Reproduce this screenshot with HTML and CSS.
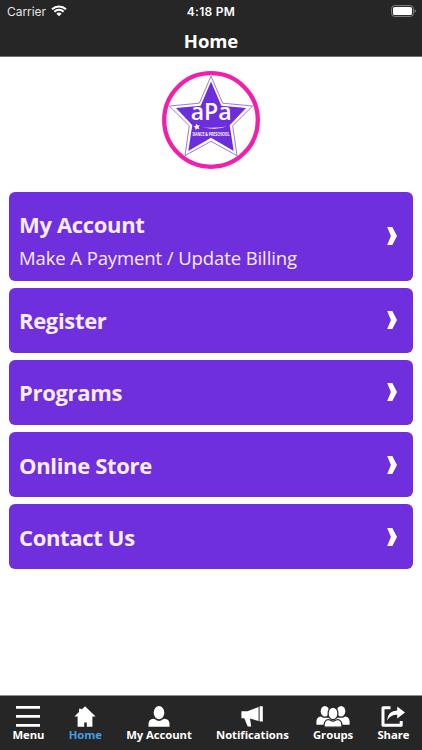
FILE: index.html
```html
<!DOCTYPE html>
<html lang="en">
<head>
    <meta charset="UTF-8">
    <meta name="viewport" content="width=device-width, initial-scale=1.0">
    <title>Home</title>
    <link rel="stylesheet" href="styles.css">
</head>
<body>
    <header class="header">
        <div class="status-bar">
            <div class="carrier">
                <span>Carrier</span>
                <svg class="wifi" width="16" height="12" viewBox="0 0 16 12">
                    <path d="M1 4.2A10.2 10.2 0 0 1 15 4.2M3.4 6.7A6.7 6.7 0 0 1 12.6 6.7" fill="none" stroke="#fff" stroke-width="2"/>
                    <path d="M8 11.3L5.4 8.7A3.8 3.8 0 0 1 10.6 8.7Z" fill="#fff"/>
                </svg>
            </div>
            <div class="time">4:18 PM</div>
            <svg class="battery" width="26" height="12" viewBox="0 0 26 12">
                <rect x="0.6" y="0.6" width="21.8" height="10.8" rx="3" fill="none" stroke="#858585"/>
                <rect x="2" y="2" width="19" height="8" rx="1.6" fill="#fff"/>
                <path d="M23.6 4.2q1.4.6 1.4 1.8t-1.4 1.8z" fill="#858585"/>
            </svg>
        </div>
        <h1 class="page-title">Home</h1>
    </header>

    <main class="content">
        <!-- Logo -->
        <svg class="logo" width="98" height="98" viewBox="0 0 98 98">
            <circle cx="49" cy="49" r="46.8" fill="#fff" stroke="#f21fac" stroke-width="4.3"/>
            <path d="M49 5.2L60.7 32.2L90.7 35L70.7 54.8L75 84.6L49 70.3L23 84.6L27.3 54.8L7.3 35L37.3 32.2Z" fill="#fff" stroke="#7045bd" stroke-width=".7"/>
            <path d="M49 10.5L59.3 34.8L84 37L67.7 54.2L71.7 80L49 66.8L26.3 80L30.3 54.2L14 37L38.7 34.8Z" fill="#6c2edb"/>
            <text class="logo-name" x="49.2" y="49.3" textLength="41" lengthAdjust="spacingAndGlyphs">aPa</text>
            <path d="M34.2 52.5l1.3 2 2.3-.3-1.3 2 1 2.1-2.3-.7-1.7 1.6v-2.4l-2.1-1.1 2.2-.8z" fill="#fff"/>
            <path d="M40 56q12 2 25-.7-11 4.3-25 .7z" fill="#fff"/>
            <text class="logo-tag" x="49" y="65.4" textLength="37" lengthAdjust="spacingAndGlyphs">DANCE &amp; PRESCHOOL</text>
        </svg>

        <!-- Links -->
        <div class="link-list">
            <a class="link-card tall">
                <div>
                    <h2>My Account</h2>
                    <p>Make A Payment / Update Billing</p>
                </div>
                <svg class="arrow" width="10" height="18" viewBox="0 0 10 18"><path d="M.2 0H5.3L10 9L5.3 18H.2L3.9 9Z"/></svg>
            </a>
            <a class="link-card">
                <h2>Register</h2>
                <svg class="arrow" width="10" height="18" viewBox="0 0 10 18"><path d="M.2 0H5.3L10 9L5.3 18H.2L3.9 9Z"/></svg>
            </a>
            <a class="link-card">
                <h2>Programs</h2>
                <svg class="arrow" width="10" height="18" viewBox="0 0 10 18"><path d="M.2 0H5.3L10 9L5.3 18H.2L3.9 9Z"/></svg>
            </a>
            <a class="link-card">
                <h2>Online Store</h2>
                <svg class="arrow" width="10" height="18" viewBox="0 0 10 18"><path d="M.2 0H5.3L10 9L5.3 18H.2L3.9 9Z"/></svg>
            </a>
            <a class="link-card">
                <h2>Contact Us</h2>
                <svg class="arrow" width="10" height="18" viewBox="0 0 10 18"><path d="M.2 0H5.3L10 9L5.3 18H.2L3.9 9Z"/></svg>
            </a>
        </div>
    </main>

    <!-- Bottom tabs -->
    <nav class="tab-bar">
        <a class="tab">
            <svg width="24" height="22" viewBox="0 0 24 22"><path d="M0 0h24v2.7H0zM0 9h24v2.7H0zM0 18h24v2.7H0z"/></svg>
            <span>Menu</span>
        </a>
        <a class="tab active">
            <svg width="22" height="22" viewBox="0 0 22 22"><path d="M11 .3L21.6 10.4H18.4V20.7H12.8V16.4H10.2V20.7H3.6V10.4H.4L5 6.1V2.8H7.5V3.7Z"/></svg>
            <span>Home</span>
        </a>
        <a class="tab">
            <svg width="22" height="22" viewBox="0 0 22 22"><ellipse cx="11" cy="6.7" rx="5.3" ry="6.6"/><path d="M.5 20.7V18.2Q.5 13 5.5 12.7L7 13.3Q11 16.7 15 13.3L16.5 12.7Q21.5 13 21.5 18.2V20.7Z"/></svg>
            <span>My Account</span>
        </a>
        <a class="tab">
            <svg width="22" height="22" viewBox="0 0 22 22"><path d="M.4 5.3H6.5L17.6.9V15.1L9 12.4L10.2 20.5H6.7L3.3 12.2H.4ZM18.6.2h3.2v15.4h-3.2z"/></svg>
            <span>Notifications</span>
        </a>
        <a class="tab">
            <svg width="34" height="22" viewBox="0 0 34 22">
                <ellipse cx="8.9" cy="5.2" rx="4.2" ry="5.2"/>
                <ellipse cx="25.1" cy="5.2" rx="4.2" ry="5.2"/>
                <path d="M.4 18.7V15.5Q.6 11 4.8 10.6L7 11.7H27L29.2 10.6Q33.4 11 33.6 15.5V18.7Z"/>
                <path class="cutout" d="M8.1 21.2V18.4Q8.6 14.1 12.4 13.5L14.5 14.2Q17 15.9 19.5 14.2L21.6 13.5Q25.4 14.1 25.9 18.4V21.2Z"/>
                <ellipse class="cutout" cx="17" cy="7.4" rx="4.9" ry="6.3"/>
            </svg>
            <span>Groups</span>
        </a>
        <a class="tab">
            <svg width="24" height="22" viewBox="0 0 24 22"><path class="line" d="M9.5 1.8H2V19.2H20.2V15"/><path d="M6 14.6Q7 4.6 16.2 4.6V.6L24 6.5L16.2 12.4V8.7Q9.7 8.4 6 14.6Z"/></svg>
            <span>Share</span>
        </a>
    </nav>
</body>
</html>
```
FILE: styles.css
```css
* {
    box-sizing: border-box;
}
body {
    margin: 0;
    height: 750px;
    display: flex;
    flex-direction: column;
    background-color: #fff;
    font-family: "Open Sans", sans-serif;
    overflow: hidden;
}
h1, h2, p {
    margin: 0;
}
.header {
    height: 57px;
    background-color: #262626;
    border-bottom: 1px solid #707070;
    color: #fff;
}
.status-bar {
    display: grid;
    grid-template-columns: 1fr auto 1fr;
    align-items: center;
    height: 22px;
    padding: 0 5px 0 7px;
    font-family: Inter, sans-serif;
    font-size: 12px;
}
.carrier {
    display: flex;
    align-items: center;
    gap: 5px;
    color: #e4e4e4;
    letter-spacing: -0.05px;
}
.wifi {
    margin-top: -1px;
}
.time {
    font-weight: 600;
    letter-spacing: 0.3px;
    position: relative;
    left: -1px;
}
.battery {
    justify-self: end;
    margin-top: -1px;
}
.page-title {
    font-size: 18.5px;
    line-height: 25px;
    padding-top: 6px;
    text-align: center;
    letter-spacing: -0.1px;
}
.content {
    flex: 1;
}
.logo {
    display: block;
    margin: 14px auto 0;
}
.logo-name {
    font-family: "Open Sans", sans-serif;
    font-size: 23px;
    font-weight: 600;
    fill: #fff;
    text-anchor: middle;
}
.logo-tag {
    font-family: "Open Sans", sans-serif;
    font-size: 5px;
    font-weight: bold;
    fill: #fff;
    text-anchor: middle;
}
.link-list {
    display: flex;
    flex-direction: column;
    gap: 7.2px;
    padding: 23.2px 9px 0;
}
.link-card {
    display: flex;
    align-items: center;
    justify-content: space-between;
    height: 65px;
    padding: 0 16px 0 10px;
    border-radius: 6px;
    background-color: #702fdc;
    color: #f6edff;
}
.link-card.tall {
    height: 88.4px;
}
.link-card h2 {
    font-size: 22px;
    line-height: 30px;
    letter-spacing: -0.33px;
}
.link-card.tall h2 {
    margin-top: 8px;
}
.link-card p {
    font-size: 18.5px;
    line-height: 26px;
    margin-top: 6px;
    letter-spacing: -0.1px;
}
.arrow {
    fill: #fff;
}
.tab-bar {
    display: flex;
    justify-content: space-between;
    height: 55px;
    padding: 10px 12.5px 0;
    border-top: 1px solid #8b908b;
    background-color: #262626;
    color: #fff;
}
.tab {
    display: flex;
    flex-direction: column;
    align-items: center;
    font-size: 11.3px;
    font-weight: bold;
    line-height: 16px;
    letter-spacing: -0.05px;
}
.tab svg {
    fill: #fff;
    margin-bottom: -1px;
}
.tab .cutout {
    stroke: #262626;
    stroke-width: 1.2px;
}
.tab .line {
    fill: none;
    stroke: #fff;
    stroke-width: 3px;
    stroke-linejoin: round;
}
.tab.active {
    color: #3f9fe5;
}
```
